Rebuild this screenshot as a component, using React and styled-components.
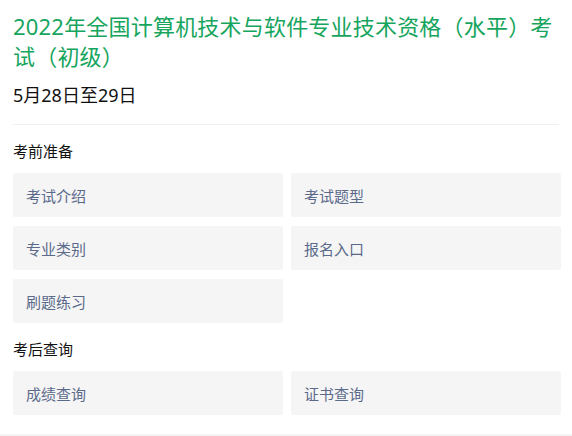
import React from "react";
import styled, { createGlobalStyle } from "styled-components";

const Global = createGlobalStyle`
  html, body { margin: 0; padding: 0; background: #fff; }
  body { font-family: "Noto Sans", "Noto Sans CJK SC", sans-serif; }
`;

const Page = styled.div`
  width: 572px;
  min-height: 436px;
  display: flex;
  flex-direction: column;
`;

const Header = styled.header`
  margin: 0 13px;
  padding: 11px 0 17px;
  border-bottom: 1px solid #f0f0f0;
`;

const Title = styled.h1`
  margin: 0;
  font-size: 22px;
  font-weight: 400;
  line-height: 30px;
  color: #16a55d;
  letter-spacing: 0.2px;
`;

const DateLine = styled.div`
  margin-top: 12px;
  font-size: 18px;
  line-height: 24px;
  color: #111;
`;

const Body = styled.main`
  padding: 0 11px 0 13px;
  flex: 1;
`;

const SectionTitle = styled.h2`
  margin: 0;
  padding: 16px 0 12px;
  font-size: 15px;
  font-weight: 400;
  line-height: 20px;
  color: #111;
`;

const Grid = styled.div`
  display: grid;
  grid-template-columns: 1fr 1fr;
  gap: 9px 8px;
`;

const Tile = styled.a`
  display: flex;
  align-items: center;
  height: 44px;
  padding: 0 13px;
  background: #f5f5f5;
  border-radius: 2px;
  font-size: 15px;
  color: #5b6a8a;
  text-decoration: none;
`;

const Footer = styled.div`
  height: 2px;
  background: #f4f4f4;
`;

const sections = [
  { title: "考前准备", items: ["考试介绍", "考试题型", "专业类别", "报名入口", "刷题练习"] },
  { title: "考后查询", items: ["成绩查询", "证书查询"] },
];

export default function App() {
  return (
    <Page>
      <Global />
      <Header>
        <Title>2022年全国计算机技术与软件专业技术资格（水平）考试（初级）</Title>
        <DateLine>5月28日至29日</DateLine>
      </Header>
      <Body>
        {sections.map((s) => (
          <section key={s.title}>
            <SectionTitle>{s.title}</SectionTitle>
            <Grid>
              {s.items.map((it) => (
                <Tile key={it}>{it}</Tile>
              ))}
            </Grid>
          </section>
        ))}
      </Body>
      <Footer />
    </Page>
  );
}
